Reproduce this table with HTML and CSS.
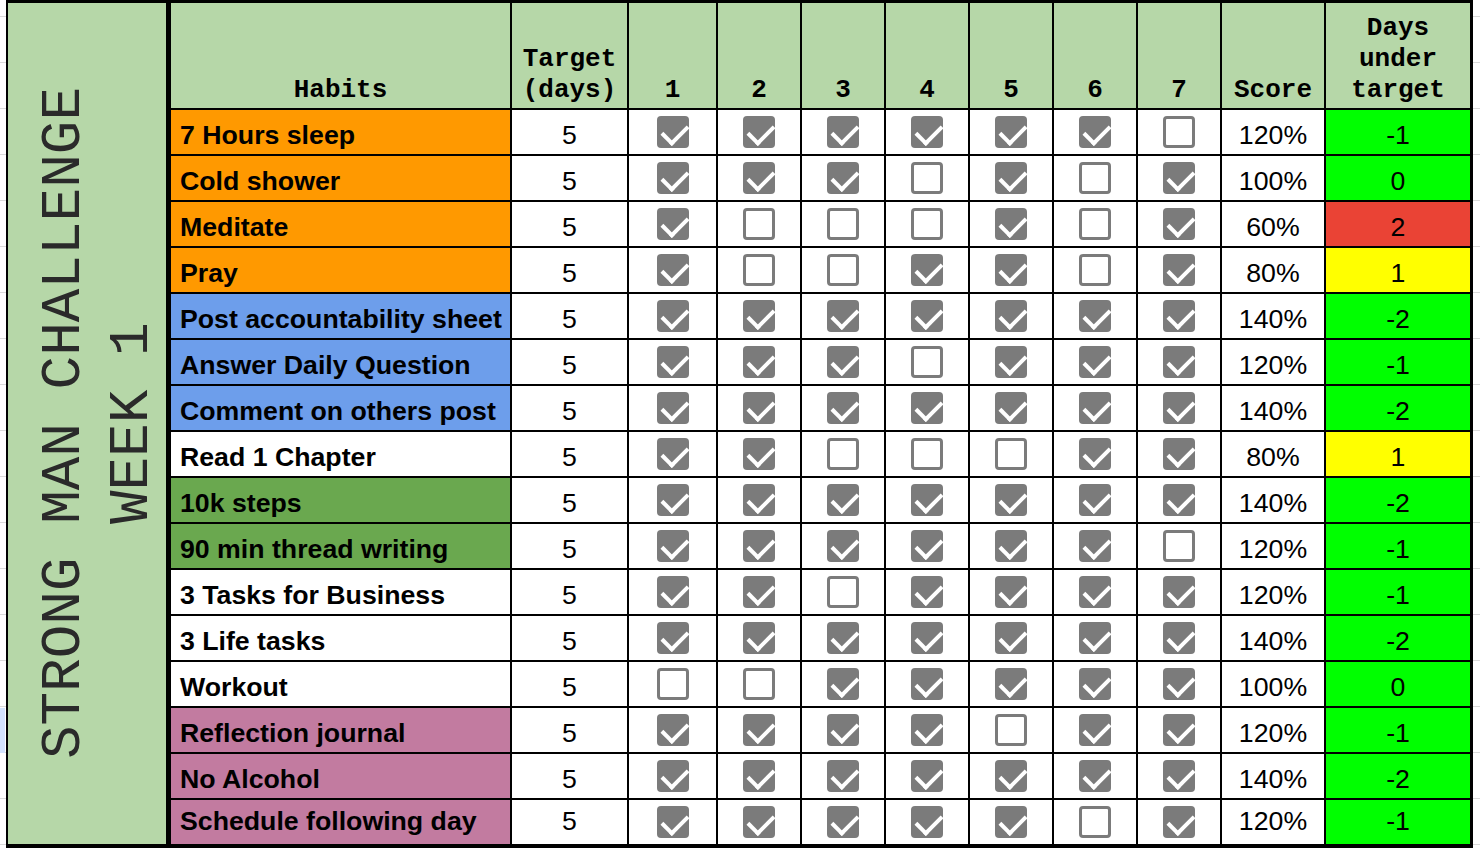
FILE: index.html
```html
<!DOCTYPE html>
<html lang="en">
<head>
<meta charset="utf-8">
<title>Strong Man Challenge - Week 1</title>
<link rel="stylesheet" href="styles.css">
</head>
<body>
<div class="sheet">
  <div class="title"><div class="title-text">STRONG MAN CHALLENGE<br>WEEK 1</div></div>

  <div class="hd">Habits</div>
  <div class="hd">Target<br>(days)</div>
  <div class="hd">1</div><div class="hd">2</div><div class="hd">3</div><div class="hd">4</div><div class="hd">5</div><div class="hd">6</div><div class="hd">7</div>
  <div class="hd">Score</div>
  <div class="hd">Days<br>under<br>target</div>

  <div class="hb or">7 Hours sleep</div><div class="n">5</div>
  <div class="ck"><span class="cb on"></span></div><div class="ck"><span class="cb on"></span></div><div class="ck"><span class="cb on"></span></div><div class="ck"><span class="cb on"></span></div><div class="ck"><span class="cb on"></span></div><div class="ck"><span class="cb on"></span></div><div class="ck"><span class="cb"></span></div>
  <div class="n">120%</div><div class="n g">-1</div>

  <div class="hb or">Cold shower</div><div class="n">5</div>
  <div class="ck"><span class="cb on"></span></div><div class="ck"><span class="cb on"></span></div><div class="ck"><span class="cb on"></span></div><div class="ck"><span class="cb"></span></div><div class="ck"><span class="cb on"></span></div><div class="ck"><span class="cb"></span></div><div class="ck"><span class="cb on"></span></div>
  <div class="n">100%</div><div class="n g">0</div>

  <div class="hb or">Meditate</div><div class="n">5</div>
  <div class="ck"><span class="cb on"></span></div><div class="ck"><span class="cb"></span></div><div class="ck"><span class="cb"></span></div><div class="ck"><span class="cb"></span></div><div class="ck"><span class="cb on"></span></div><div class="ck"><span class="cb"></span></div><div class="ck"><span class="cb on"></span></div>
  <div class="n">60%</div><div class="n r">2</div>

  <div class="hb or">Pray</div><div class="n">5</div>
  <div class="ck"><span class="cb on"></span></div><div class="ck"><span class="cb"></span></div><div class="ck"><span class="cb"></span></div><div class="ck"><span class="cb on"></span></div><div class="ck"><span class="cb on"></span></div><div class="ck"><span class="cb"></span></div><div class="ck"><span class="cb on"></span></div>
  <div class="n">80%</div><div class="n y">1</div>

  <div class="hb bl">Post accountability sheet</div><div class="n">5</div>
  <div class="ck"><span class="cb on"></span></div><div class="ck"><span class="cb on"></span></div><div class="ck"><span class="cb on"></span></div><div class="ck"><span class="cb on"></span></div><div class="ck"><span class="cb on"></span></div><div class="ck"><span class="cb on"></span></div><div class="ck"><span class="cb on"></span></div>
  <div class="n">140%</div><div class="n g">-2</div>

  <div class="hb bl">Answer Daily Question</div><div class="n">5</div>
  <div class="ck"><span class="cb on"></span></div><div class="ck"><span class="cb on"></span></div><div class="ck"><span class="cb on"></span></div><div class="ck"><span class="cb"></span></div><div class="ck"><span class="cb on"></span></div><div class="ck"><span class="cb on"></span></div><div class="ck"><span class="cb on"></span></div>
  <div class="n">120%</div><div class="n g">-1</div>

  <div class="hb bl">Comment on others post</div><div class="n">5</div>
  <div class="ck"><span class="cb on"></span></div><div class="ck"><span class="cb on"></span></div><div class="ck"><span class="cb on"></span></div><div class="ck"><span class="cb on"></span></div><div class="ck"><span class="cb on"></span></div><div class="ck"><span class="cb on"></span></div><div class="ck"><span class="cb on"></span></div>
  <div class="n">140%</div><div class="n g">-2</div>

  <div class="hb">Read 1 Chapter</div><div class="n">5</div>
  <div class="ck"><span class="cb on"></span></div><div class="ck"><span class="cb on"></span></div><div class="ck"><span class="cb"></span></div><div class="ck"><span class="cb"></span></div><div class="ck"><span class="cb"></span></div><div class="ck"><span class="cb on"></span></div><div class="ck"><span class="cb on"></span></div>
  <div class="n">80%</div><div class="n y">1</div>

  <div class="hb dg">10k steps</div><div class="n">5</div>
  <div class="ck"><span class="cb on"></span></div><div class="ck"><span class="cb on"></span></div><div class="ck"><span class="cb on"></span></div><div class="ck"><span class="cb on"></span></div><div class="ck"><span class="cb on"></span></div><div class="ck"><span class="cb on"></span></div><div class="ck"><span class="cb on"></span></div>
  <div class="n">140%</div><div class="n g">-2</div>

  <div class="hb dg">90 min thread writing</div><div class="n">5</div>
  <div class="ck"><span class="cb on"></span></div><div class="ck"><span class="cb on"></span></div><div class="ck"><span class="cb on"></span></div><div class="ck"><span class="cb on"></span></div><div class="ck"><span class="cb on"></span></div><div class="ck"><span class="cb on"></span></div><div class="ck"><span class="cb"></span></div>
  <div class="n">120%</div><div class="n g">-1</div>

  <div class="hb">3 Tasks for Business</div><div class="n">5</div>
  <div class="ck"><span class="cb on"></span></div><div class="ck"><span class="cb on"></span></div><div class="ck"><span class="cb"></span></div><div class="ck"><span class="cb on"></span></div><div class="ck"><span class="cb on"></span></div><div class="ck"><span class="cb on"></span></div><div class="ck"><span class="cb on"></span></div>
  <div class="n">120%</div><div class="n g">-1</div>

  <div class="hb">3 Life tasks</div><div class="n">5</div>
  <div class="ck"><span class="cb on"></span></div><div class="ck"><span class="cb on"></span></div><div class="ck"><span class="cb on"></span></div><div class="ck"><span class="cb on"></span></div><div class="ck"><span class="cb on"></span></div><div class="ck"><span class="cb on"></span></div><div class="ck"><span class="cb on"></span></div>
  <div class="n">140%</div><div class="n g">-2</div>

  <div class="hb">Workout</div><div class="n">5</div>
  <div class="ck"><span class="cb"></span></div><div class="ck"><span class="cb"></span></div><div class="ck"><span class="cb on"></span></div><div class="ck"><span class="cb on"></span></div><div class="ck"><span class="cb on"></span></div><div class="ck"><span class="cb on"></span></div><div class="ck"><span class="cb on"></span></div>
  <div class="n">100%</div><div class="n g">0</div>

  <div class="hb pk">Reflection journal</div><div class="n">5</div>
  <div class="ck"><span class="cb on"></span></div><div class="ck"><span class="cb on"></span></div><div class="ck"><span class="cb on"></span></div><div class="ck"><span class="cb on"></span></div><div class="ck"><span class="cb"></span></div><div class="ck"><span class="cb on"></span></div><div class="ck"><span class="cb on"></span></div>
  <div class="n">120%</div><div class="n g">-1</div>

  <div class="hb pk">No Alcohol</div><div class="n">5</div>
  <div class="ck"><span class="cb on"></span></div><div class="ck"><span class="cb on"></span></div><div class="ck"><span class="cb on"></span></div><div class="ck"><span class="cb on"></span></div><div class="ck"><span class="cb on"></span></div><div class="ck"><span class="cb on"></span></div><div class="ck"><span class="cb on"></span></div>
  <div class="n">140%</div><div class="n g">-2</div>

  <div class="hb pk lr">Schedule following day</div><div class="n lr">5</div>
  <div class="ck"><span class="cb on"></span></div><div class="ck"><span class="cb on"></span></div><div class="ck"><span class="cb on"></span></div><div class="ck"><span class="cb on"></span></div><div class="ck"><span class="cb on"></span></div><div class="ck"><span class="cb"></span></div><div class="ck"><span class="cb on"></span></div>
  <div class="n lr">120%</div><div class="n g lr">-1</div>
</div>
</body>
</html>
```

FILE: styles.css
```css
* { box-sizing: border-box; margin: 0; padding: 0; }

html, body { height: 100%; }

body {
  background:
    linear-gradient(#d3e3fd, #d3e3fd) 0 708px / 5px 45px no-repeat,
    repeating-linear-gradient(to bottom, #fff 0, #fff 16px, #dadada 16px, #dadada 17px, #fff 17px, #fff 46px);
  font-family: "Liberation Sans", Arial, sans-serif;
  color: #000;
  overflow: hidden;
}

.sheet {
  margin-left: 6px;
  width: 1467px;
  display: grid;
  grid-template-columns: 161px 339px 115px 87px repeat(6, 82px) 102px 144px;
  grid-template-rows: 105px repeat(16, 44px);
  gap: 2px;
  padding: 3px 3px 4px 2px;
  background: #000;
}

.title {
  grid-column: 1;
  grid-row: 1 / span 17;
  background: #b6d7a8;
  border-right: 3px solid #000;
  display: flex;
  align-items: center;
  justify-content: center;
  padding-left: 22px;
}

.title-text {
  writing-mode: vertical-rl;
  transform: rotate(180deg);
  font-family: "Courier New", "Liberation Mono", monospace;
  font-size: 56px;
  line-height: 68px;
  text-align: center;
  color: #2a2a2a;
  white-space: nowrap;
}

.hd {
  background: #b6d7a8;
  font-family: "Courier New", "Liberation Mono", monospace;
  font-weight: bold;
  font-size: 26px;
  line-height: 31px;
  display: flex;
  align-items: flex-end;
  justify-content: center;
  text-align: center;
  padding-bottom: 2px;
}

.hb, .n {
  background: #fff;
  font-size: 26.7px;
  line-height: 26px;
  display: flex;
  align-items: flex-end;
  padding-bottom: 6px;
  white-space: nowrap;
}

.hb {
  font-weight: bold;
  padding-left: 9px;
}

.n { justify-content: center; }

.lr { padding-bottom: 10px; }

.or { background: #ff9900; }
.bl { background: #6d9eeb; }
.dg { background: #6aa84f; }
.pk { background: #c27ba0; }
.g { background: #00ff00; }
.r { background: #ea4335; }
.y { background: #ffff00; }

.ck {
  background: #fff;
  display: flex;
  align-items: center;
  justify-content: center;
}

.cb {
  display: block;
  width: 32px;
  height: 32px;
  border: 3px solid #7b7b7b;
  border-radius: 4px;
  background: #fff;
  position: relative;
}

.cb.on {
  border: 0;
  background: #7b7b7b;
}

.cb.on::after {
  content: "";
  position: absolute;
  left: 10px;
  top: 3px;
  width: 12px;
  height: 21px;
  border: solid #fff;
  border-width: 0 4px 4px 0;
  transform: rotate(45deg);
}
```
